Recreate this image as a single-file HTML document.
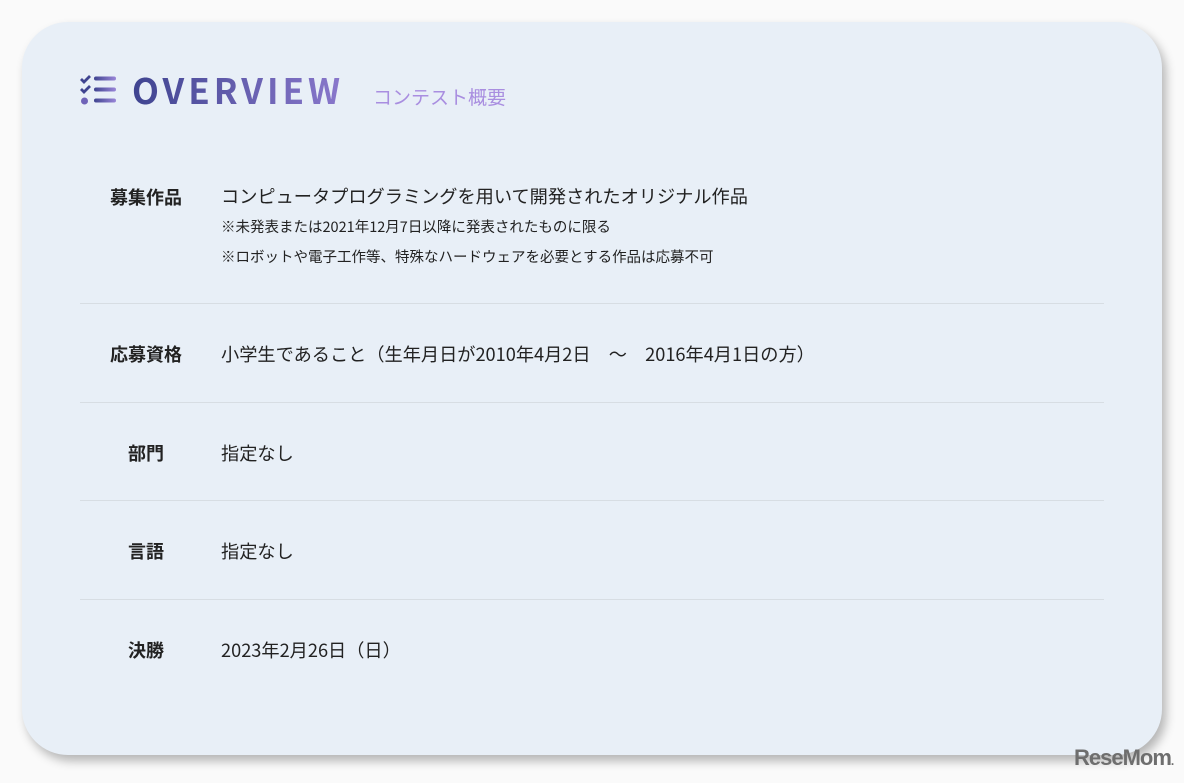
<!DOCTYPE html>
<html><head><meta charset="utf-8"><style>
body{margin:0;width:1184px;height:783px;background:#fafafa;font-family:"Noto Sans CJK JP",sans-serif;position:relative;overflow:hidden;color:#222}
.card{position:absolute;left:22px;top:22px;width:1140px;height:733px;background:#e8eff7;border-radius:46px;box-shadow:4px 6px 10px rgba(0,0,0,0.28)}
.title{position:absolute;left:132px;top:68px;font-size:35px;line-height:44px;font-weight:bold;letter-spacing:4px;background:linear-gradient(90deg,#3f4490,#8a78cc);-webkit-background-clip:text;color:transparent;font-family:"Noto Sans CJK JP",sans-serif}
.sub{position:absolute;left:373px;top:84px;font-size:19px;line-height:26px;color:#a98ee0}
.row{position:absolute;left:80px;width:1024px;border-bottom:1px solid #d7dde3}
.lab{position:absolute;width:132px;text-align:center;font-weight:bold;font-size:18px;line-height:24px}
.val{position:absolute;left:141px;font-size:18.2px;line-height:24px}
.note{font-size:14.5px;line-height:20px;margin-top:10px}
</style></head><body>
<div class="card"></div>
<svg style="position:absolute;left:80px;top:74px" width="38" height="32" viewBox="0 0 38 32">
<defs><linearGradient id="g" x1="0" x2="1"><stop offset="0" stop-color="#3f4490"/><stop offset="1" stop-color="#9a86d8"/></linearGradient></defs>
<path d="M1 5l3 3 6-6M1 15l3 3 6-6" stroke="#3f4490" stroke-width="2.8" fill="none"/>
<circle cx="4.5" cy="27" r="3.5" fill="#6f63b8"/>
<rect x="14" y="2.5" width="22" height="4" rx="2" fill="url(#g)"/>
<rect x="14" y="13.5" width="22" height="4" rx="2" fill="url(#g)"/>
<rect x="14" y="24.5" width="22" height="4" rx="2" fill="url(#g)"/>
</svg>
<div class="title">OVERVIEW</div>
<div class="sub">コンテスト概要</div>

<div class="row" style="top:160px;height:143px">
<div class="lab" style="top:25px">募集作品</div>
<div class="val" style="top:24px">コンピュータプログラミングを用いて開発されたオリジナル作品
<div class="note" style="margin-top:9px">※未発表または2021年12月7日以降に発表されたものに限る</div>
<div class="note" style="margin-top:10px">※ロボットや電子工作等、特殊なハードウェアを必要とする作品は応募不可</div></div>
</div>
<div class="row" style="top:303px;height:99px">
<div class="lab" style="top:39px">応募資格</div>
<div class="val" style="top:39px">小学生であること（生年月日が2010年4月2日　～　2016年4月1日の方）</div>
</div>
<div class="row" style="top:402px;height:98px">
<div class="lab" style="top:39px">部門</div><div class="val" style="top:39px">指定なし</div>
</div>
<div class="row" style="top:500px;height:99px">
<div class="lab" style="top:39px">言語</div><div class="val" style="top:39px">指定なし</div>
</div>
<div class="row" style="top:599px;height:99px;border:none">
<div class="lab" style="top:39px">決勝</div><div class="val" style="top:39px">2023年2月26日（日）</div>
</div>
<div style="position:absolute;left:1074px;top:745px;font-size:22px;font-weight:bold;color:#6e6e6e;letter-spacing:-1px;font-family:'Liberation Sans',sans-serif">ReseMom<span style="font-size:12px">.</span></div>
</body></html>
